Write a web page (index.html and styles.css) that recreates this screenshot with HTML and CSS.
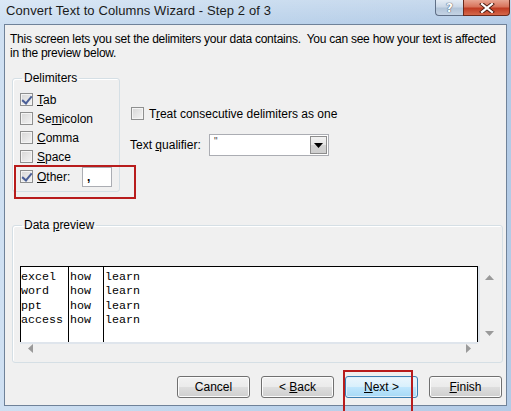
FILE: index.html
```html
<!DOCTYPE html>
<html>
<head>
<meta charset="utf-8">
<link rel="stylesheet" href="styles.css">
</head>
<body>
<div class="window">
  <div class="titlebar">
    <div class="title">Convert Text to Columns Wizard - Step 2 of 3</div>
    <div class="caption-btns">
      <div class="cap help">?</div>
      <div class="cap close">
        <svg width="16" height="10" viewBox="0 0 16 10"><path d="M3 1 L13 9 M13 1 L3 9" stroke="#4a1a10" stroke-width="4" stroke-linecap="square"/><path d="M3 1 L13 9 M13 1 L3 9" stroke="#fff" stroke-width="2.2" stroke-linecap="square"/></svg>
      </div>
    </div>
  </div>
  <div class="client">
    <div class="intro">This screen lets you set the delimiters your data contains.&nbsp; You can see how your text is affected<br>in the preview below.</div>
    <div class="top-row">
      <fieldset class="group delims">
        <legend>Delimiters</legend>
        <div class="cb-row"><span class="cb checked"></span><span><u>T</u>ab</span></div>
        <div class="cb-row"><span class="cb"></span><span>Se<u>m</u>icolon</span></div>
        <div class="cb-row"><span class="cb"></span><span><u>C</u>omma</span></div>
        <div class="cb-row"><span class="cb"></span><span><u>S</u>pace</span></div>
        <div class="cb-row other"><span class="cb checked"></span><span class="other-label"><u>O</u>ther:</span><span class="textbox">,</span></div>
      </fieldset>
      <div class="right-col">
        <div class="cb-row treat"><span class="cb"></span><span>T<u>r</u>eat consecutive delimiters as one</span></div>
        <div class="qual-row">
          <span class="qual-label">Text <u>q</u>ualifier:</span>
          <div class="combo"><span class="combo-val">"</span><span class="combo-btn"><svg width="9" height="5" viewBox="0 0 9 5"><path d="M0 0 H9 L4.5 5 Z" fill="#000"/></svg></span></div>
        </div>
      </div>
    </div>
    <fieldset class="group preview-group">
      <legend>Data <u>p</u>review</legend>
      <div class="preview">
        <div class="preview-main">
          <div class="grid">
            <div class="col c1"><div>excel</div><div>word</div><div>ppt</div><div>access</div></div>
            <div class="col c2"><div>how</div><div>how</div><div>how</div><div>how</div></div>
            <div class="col c3"><div>learn</div><div>learn</div><div>learn</div><div>learn</div></div>
          </div>
          <div class="vscroll">
            <svg width="9" height="5" viewBox="0 0 9 5"><path d="M0 5 H9 L4.5 0 Z" fill="#9a9a9a"/></svg>
            <svg width="9" height="5" viewBox="0 0 9 5"><path d="M0 0 H9 L4.5 5 Z" fill="#9a9a9a"/></svg>
          </div>
        </div>
        <div class="hscroll">
          <svg width="5" height="9" viewBox="0 0 5 9"><path d="M5 0 V9 L0 4.5 Z" fill="#9a9a9a"/></svg>
          <svg width="5" height="9" viewBox="0 0 5 9"><path d="M0 0 V9 L5 4.5 Z" fill="#9a9a9a"/></svg>
        </div>
      </div>
    </fieldset>
    <div class="buttons">
      <div class="btn"><span>Cancel</span></div>
      <div class="btn"><span>&lt; <u>B</u>ack</span></div>
      <div class="btn focused"><span><u>N</u>ext &gt;</span></div>
      <div class="btn"><span><u>F</u>inish</span></div>
    </div>
  </div>
  <div class="mark mark-other"></div>
  <div class="mark mark-next"></div>
</div>
</body>
</html>
```

FILE: styles.css
```css
* { box-sizing: border-box; }
html, body { margin: 0; padding: 0; }
body {
  width: 511px;
  height: 411px;
  overflow: hidden;
  font-family: "Liberation Sans", Arial, sans-serif;
  font-size: 12px;
  color: #000;
}
.window {
  position: relative;
  width: 511px;
  height: 411px;
  display: flex;
  flex-direction: column;
  background: linear-gradient(to right, #cfe0f2 0%, #bcd3eb 50%, #b3cbe6 100%);
}
.titlebar {
  height: 24px;
  display: flex;
  justify-content: space-between;
  align-items: flex-start;
  padding-left: 6px;
  background: linear-gradient(to bottom, rgba(255,255,255,0.25), rgba(255,255,255,0));
}
.title {
  font-size: 13px;
  line-height: 22px;
  color: #1a1a1a;
  letter-spacing: 0.1px;
}
.caption-btns {
  display: flex;
  margin-right: 1px;
}
.cap {
  height: 16px;
  display: flex;
  align-items: center;
  justify-content: center;
  border: 1px solid #5f6f86;
  border-top: none;
}
.help {
  width: 28px;
  border-radius: 0 0 0 4px;
  border-right: none;
  background: linear-gradient(to bottom, #e4ecf5 0%, #cbd8e7 45%, #b2c4d8 55%, #c4d3e4 100%);
  font-family: "DejaVu Sans", sans-serif;
  font-weight: bold;
  font-size: 12px;
  color: #fff;
  text-shadow: 0 0 1px #3a4a60, 0 0 1px #3a4a60;
}
.close {
  width: 47px;
  border-radius: 0 0 4px 0;
  border-color: #6b2a1c;
  background: linear-gradient(to bottom, #e8a592 0%, #d8745c 45%, #c03c23 55%, #d5684a 100%);
}
.client {
  flex: 1;
  margin: 0 4px 5px 4px;
  background: #f0f0f0;
  border: 1px solid #6f8299;
  display: flex;
  flex-direction: column;
}
.intro {
  padding: 7px 0 0 5px;
  line-height: 14px;
  height: 46px;
  white-space: nowrap;
  letter-spacing: -0.25px;
}
.top-row {
  display: flex;
  align-items: flex-start;
}
.group {
  margin: 0;
  border: 1px solid #d5dfe5;
  border-radius: 3px;
  box-shadow: inset 1px 1px 0 #fff;
}
.group legend {
  padding: 0 2px;
  margin-left: 2px;
  line-height: 14px;
}
.delims {
  margin-left: 7px;
  width: 108px;
  padding: 5px 0 4px 7px;
  height: 121px;
}
.cb-row {
  display: flex;
  align-items: center;
  height: 19px;
  gap: 4px;
  white-space: nowrap;
}
.cb-row.other { height: 21px; }
.cb {
  width: 13px;
  height: 13px;
  flex: none;
  border: 1px solid #8e8f8f;
  background: linear-gradient(135deg, #d6d6d6 0%, #f4f4f4 100%);
  box-shadow: inset 0 0 0 1px #f4f4f4;
  position: relative;
}
.cb.checked::after {
  content: "";
  position: absolute;
  left: 3px;
  top: 0px;
  width: 4px;
  height: 8px;
  border: solid #4a5f97;
  border-width: 0 2px 2px 0;
  transform: rotate(40deg);
}
.other-label { width: 41px; }
.textbox {
  width: 30px;
  height: 20px;
  background: #fff;
  border: 1px solid #abadb3;
  padding-left: 4px;
  line-height: 18px;
  font-weight: bold;
}
.right-col {
  margin-left: 10px;
  margin-top: 33px;
}
.treat { gap: 5px; margin-left: 1px; }
.qual-row {
  display: flex;
  align-items: center;
  margin-top: 11px;
}
.qual-label { width: 79px; }
.combo {
  width: 120px;
  height: 22px;
  background: #fff;
  border: 1px solid #abadb3;
  display: flex;
  justify-content: space-between;
  align-items: stretch;
}
.combo-val {
  padding-left: 4px;
  line-height: 14px;
  font-size: 10px;
  color: #444;
}
.combo-btn {
  width: 17px;
  margin: 1px;
  border: 1px solid #8d8d8d;
  background: linear-gradient(to bottom, #f2f2f2 0%, #e6e6e6 50%, #d2d2d2 51%, #cfcfcf 100%);
  display: flex;
  align-items: center;
  justify-content: center;
}
.preview-group {
  margin: 26px 0 0 7px;
  width: 491px;
  padding: 34px 6px 10px 7px;
  height: 145px;
}
.preview {
  display: flex;
  flex-direction: column;
  width: 475px;
}
.preview-main {
  display: flex;
  height: 76px;
}
.grid {
  width: 458px;
  background: #fff;
  border: 1px solid #000;
  border-bottom: none;
  display: flex;
  font-family: "Liberation Mono", "Courier New", monospace;
  font-size: 11.67px;
  line-height: 14.3px;
}
.col { padding-top: 3px; }
.c1 { width: 48px; border-right: 1px solid #000; }
.c2 { width: 35px; border-right: 1px solid #000; padding-left: 1px; }
.c3 { padding-left: 1px; }
.vscroll {
  width: 17px;
  border-left: 2px solid #dfe5ec;
  display: flex;
  flex-direction: column;
  justify-content: space-between;
  align-items: center;
  padding: 9px 0 6px 4px;
}
.hscroll {
  width: 458px;
  height: 10px;
  border-top: 2px solid #dfe5ec;
  display: flex;
  justify-content: space-between;
  align-items: center;
  padding: 0 7px 0 8px;
}
.buttons {
  display: flex;
  gap: 11px;
  margin: 13px 0 0 172px;
}
.btn {
  width: 73px;
  height: 22px;
  border: 1px solid #707070;
  border-radius: 3px;
  background: linear-gradient(to bottom, #f2f2f2 0%, #ebebeb 48%, #dddddd 52%, #cfcfcf 100%);
  box-shadow: inset 0 0 0 1px #fcfcfc;
  display: flex;
  align-items: center;
  justify-content: center;
  line-height: 14px;
}
.btn.focused {
  border-color: #3c7fb1;
  background: linear-gradient(to bottom, #eaf6fd 0%, #d9f0fc 48%, #bee6fd 52%, #a7d9f5 100%);
  box-shadow: inset 0 0 0 1px #e0f0fb;
}
.mark {
  position: absolute;
  border: 2px solid #b81c1c;
}
.mark-other {
  left: 14px;
  top: 165px;
  width: 122px;
  height: 34px;
}
.mark-next {
  left: 343px;
  top: 370px;
  width: 70px;
  height: 50px;
}
```
